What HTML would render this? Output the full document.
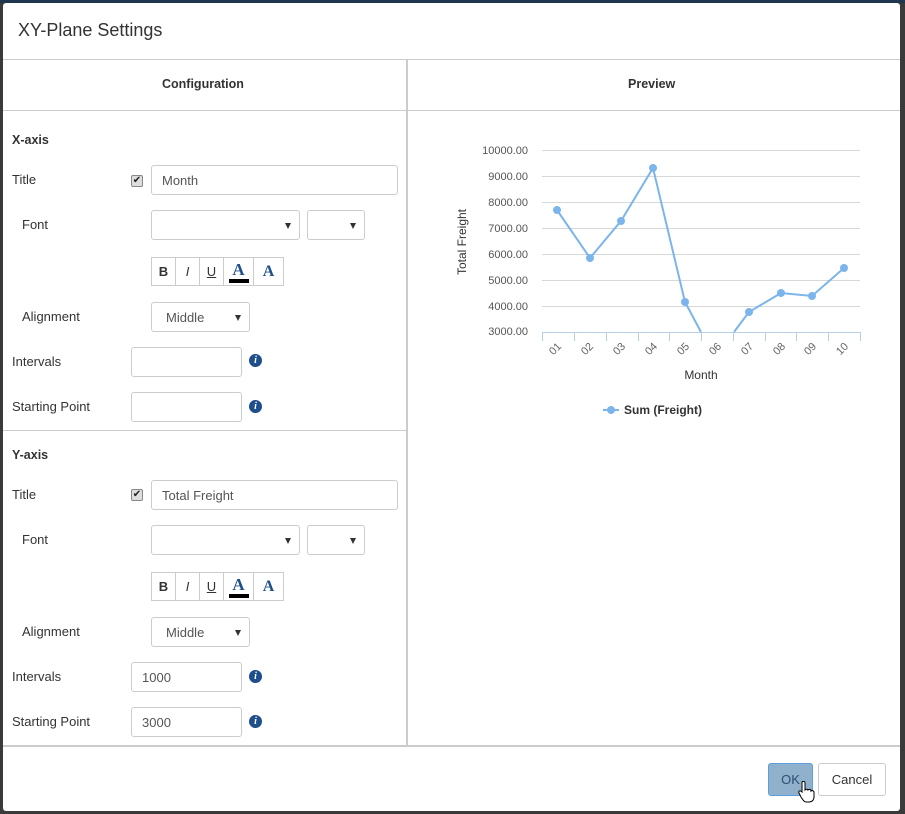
<!DOCTYPE html>
<html><head><style>
*{box-sizing:border-box}
body{margin:0;width:905px;height:814px;background:#3a3a3a;font-family:"Liberation Sans",sans-serif;font-size:13px;color:#333;position:relative;overflow:hidden}
.dlg{position:absolute;left:3px;top:3px;width:897px;height:808px;background:#fff;border-radius:3px}
.topbar{position:absolute;left:0;top:0;width:905px;height:3px;background:#1f3550}
.a{position:absolute}
.lbl{position:absolute;font-size:13px;color:#333}
.inp{position:absolute;border:1px solid #ccc;border-radius:3px;height:30px;background:#fff;font-size:13px;color:#555;padding:7px 10px}
.sel{position:absolute;border:1px solid #ccc;border-radius:3px;height:30px;background:#fff}
.sel:after{content:"";position:absolute;right:8px;top:12px;border-left:3.5px solid transparent;border-right:3.5px solid transparent;border-top:6px solid #333}
.chk{position:absolute;width:12px;height:12px;border:1px solid #888;border-radius:2px;background:#ddd;font-size:10px;line-height:10px;text-align:center;color:#222}
.tb{position:absolute;height:30px;display:flex}
.tb div{width:25px;height:29px;border:1px solid #ccc;margin-right:-1px;text-align:center;line-height:27px;font-size:13px;background:#fff}
.info{position:absolute;width:13px;height:13px;border-radius:50%;background:#1e4f8c;color:#fff;font:bold italic 10px/13px "Liberation Serif",serif;text-align:center}
.hdr{position:absolute;font-weight:bold;font-size:12.5px;color:#333}
</style></head><body>
<div class="topbar"></div>
<div class="dlg">
<div class="a" style="left:15px;top:17px;font-size:18px;color:#333">XY-Plane Settings</div>
<div class="a" style="left:0;top:56px;width:897px;border-top:1px solid #ccc"></div>
<div class="a" style="left:0;top:107px;width:897px;border-top:1px solid #ccc"></div>
<div class="a" style="left:403px;top:56px;height:687px;border-left:2px solid #ccc"></div>
<div class="a" style="left:0;top:742px;width:897px;border-top:2px solid #ccc"></div>
<div class="a" style="left:0;top:427px;width:403px;border-top:1px solid #ccc"></div>
<div class="hdr" style="left:159px;top:74px">Configuration</div>
<div class="hdr" style="left:625px;top:74px">Preview</div>
</div>

<div class="hdr" style="left:12px;top:133px">X-axis</div>
<div class="lbl" style="left:12px;top:172px">Title</div>
<div class="chk" style="left:131px;top:175px">✔</div>
<div class="inp" style="left:151px;top:165px;width:247px">Month</div>
<div class="lbl" style="left:22px;top:217px">Font</div>
<div class="sel" style="left:151px;top:210px;width:149px"></div>
<div class="sel" style="left:307px;top:210px;width:58px"></div>
<div class="tb" style="left:151px;top:257px"><div style="font-weight:bold">B</div><div style="font-style:italic">I</div><div style="text-decoration:underline">U</div><div style="width:31px;color:#1e4f8c;font:bold 17px/24px 'Liberation Serif',serif;position:relative">A<span style="position:absolute;left:5px;bottom:2px;width:20px;height:4px;background:#000"></span></div><div style="width:31px;color:#1e4f8c;font:bold 16px/27px 'Liberation Serif',serif">A</div></div>
<div class="lbl" style="left:22px;top:309px">Alignment</div>
<div class="sel" style="left:151px;top:302px;width:99px;font-size:13px;color:#555;padding:7px 14px">Middle</div>
<div class="lbl" style="left:12px;top:354px">Intervals</div>
<div class="inp" style="left:131px;top:347px;width:111px"></div>
<div class="info" style="left:249px;top:354px">i</div>
<div class="lbl" style="left:12px;top:399px">Starting Point</div>
<div class="inp" style="left:131px;top:392px;width:111px"></div>
<div class="info" style="left:249px;top:400px">i</div>

<div class="hdr" style="left:12px;top:448px">Y-axis</div>
<div class="lbl" style="left:12px;top:487px">Title</div>
<div class="chk" style="left:131px;top:489px">✔</div>
<div class="inp" style="left:151px;top:480px;width:247px">Total Freight</div>
<div class="lbl" style="left:22px;top:532px">Font</div>
<div class="sel" style="left:151px;top:525px;width:149px"></div>
<div class="sel" style="left:307px;top:525px;width:58px"></div>
<div class="tb" style="left:151px;top:572px"><div style="font-weight:bold">B</div><div style="font-style:italic">I</div><div style="text-decoration:underline">U</div><div style="width:31px;color:#1e4f8c;font:bold 17px/24px 'Liberation Serif',serif;position:relative">A<span style="position:absolute;left:5px;bottom:2px;width:20px;height:4px;background:#000"></span></div><div style="width:31px;color:#1e4f8c;font:bold 16px/27px 'Liberation Serif',serif">A</div></div>
<div class="lbl" style="left:22px;top:624px">Alignment</div>
<div class="sel" style="left:151px;top:617px;width:99px;font-size:13px;color:#555;padding:7px 14px">Middle</div>
<div class="lbl" style="left:12px;top:669px">Intervals</div>
<div class="inp" style="left:131px;top:662px;width:111px">1000</div>
<div class="info" style="left:249px;top:670px">i</div>
<div class="lbl" style="left:12px;top:714px">Starting Point</div>
<div class="inp" style="left:131px;top:707px;width:111px">3000</div>
<div class="info" style="left:249px;top:715px">i</div>

<svg class="a" style="left:0;top:0" width="905" height="814">
<g stroke="#d8d8d8" stroke-width="1">
<line x1="542" y1="150.5" x2="860" y2="150.5"/><line x1="542" y1="176.5" x2="860" y2="176.5"/><line x1="542" y1="202.5" x2="860" y2="202.5"/><line x1="542" y1="228.5" x2="860" y2="228.5"/><line x1="542" y1="254.5" x2="860" y2="254.5"/><line x1="542" y1="280.5" x2="860" y2="280.5"/><line x1="542" y1="306.5" x2="860" y2="306.5"/>
</g>
<g stroke="#b8cfe8"><line x1="542" y1="332.5" x2="861" y2="332.5"/>
<line x1="542.5" y1="332" x2="542.5" y2="341"/><line x1="574.5" y1="332" x2="574.5" y2="341"/><line x1="606.5" y1="332" x2="606.5" y2="341"/><line x1="638.5" y1="332" x2="638.5" y2="341"/><line x1="669.5" y1="332" x2="669.5" y2="341"/><line x1="701.5" y1="332" x2="701.5" y2="341"/><line x1="733.5" y1="332" x2="733.5" y2="341"/><line x1="765.5" y1="332" x2="765.5" y2="341"/><line x1="796.5" y1="332" x2="796.5" y2="341"/><line x1="828.5" y1="332" x2="828.5" y2="341"/><line x1="860.5" y1="332" x2="860.5" y2="341"/></g>
<g font-family="Liberation Sans,sans-serif" font-size="11" fill="#555" text-anchor="end">
<text x="528" y="154">10000.00</text><text x="528" y="180">9000.00</text><text x="528" y="206">8000.00</text><text x="528" y="232">7000.00</text><text x="528" y="258">6000.00</text><text x="528" y="284">5000.00</text><text x="528" y="310">4000.00</text><text x="528" y="335">3000.00</text>
</g>
<g font-family="Liberation Sans,sans-serif" font-size="11" fill="#666" text-anchor="end">
<text transform="translate(562,347) rotate(-45)">01</text><text transform="translate(594,347) rotate(-45)">02</text><text transform="translate(626,347) rotate(-45)">03</text><text transform="translate(658,347) rotate(-45)">04</text><text transform="translate(690,347) rotate(-45)">05</text><text transform="translate(722,347) rotate(-45)">06</text><text transform="translate(754,347) rotate(-45)">07</text><text transform="translate(786,347) rotate(-45)">08</text><text transform="translate(817,347) rotate(-45)">09</text><text transform="translate(849,347) rotate(-45)">10</text>
</g>
<text x="701" y="379" font-family="Liberation Sans,sans-serif" font-size="12" fill="#333" text-anchor="middle">Month</text>
<text transform="translate(466,242) rotate(-90)" font-family="Liberation Sans,sans-serif" font-size="12" fill="#333" text-anchor="middle">Total Freight</text>
<polyline fill="none" stroke="#7cb5ec" stroke-width="2" points="557,210 590,258 621,221 653,168 685,302 701,332"/>
<polyline fill="none" stroke="#7cb5ec" stroke-width="2" points="734,332 749,312 781,293 812,296 844,268"/>
<g fill="#7cb5ec"><circle cx="557" cy="210" r="4"/><circle cx="590" cy="258" r="4"/><circle cx="621" cy="221" r="4"/><circle cx="653" cy="168" r="4"/><circle cx="685" cy="302" r="4"/><circle cx="749" cy="312" r="4"/><circle cx="781" cy="293" r="4"/><circle cx="812" cy="296" r="4"/><circle cx="844" cy="268" r="4"/>
<rect x="603" y="409" width="16" height="2"/><circle cx="611" cy="410" r="4"/></g>
<text x="624" y="414" font-family="Liberation Sans,sans-serif" font-size="12" font-weight="bold" fill="#333">Sum (Freight)</text>
</svg>

<div class="a" style="left:768px;top:763px;width:45px;height:33px;background:#8fb1cc;border:1px solid #5d9de0;border-radius:3px;color:#2d4f73;font-size:13px;text-align:center;line-height:31px">OK</div>
<div class="a" style="left:818px;top:763px;width:68px;height:33px;background:#fff;border:1px solid #ccc;border-radius:3px;color:#333;font-size:13px;text-align:center;line-height:31px">Cancel</div>
<svg class="a" style="left:798px;top:781px" width="18" height="22"><path d="M4 1 C5 0 7 0 7 2 L7 9 C8 8 10 8 10 9 C11 8 13 8 13 10 C14 9 16 10 16 11 L16 16 C16 19 14 21 11 21 L8 21 C6 21 5 19 3 16 L1 12 C0 10 2 9 4 11 Z" fill="#fff" stroke="#000" stroke-width="1"/></svg>
</body></html>
